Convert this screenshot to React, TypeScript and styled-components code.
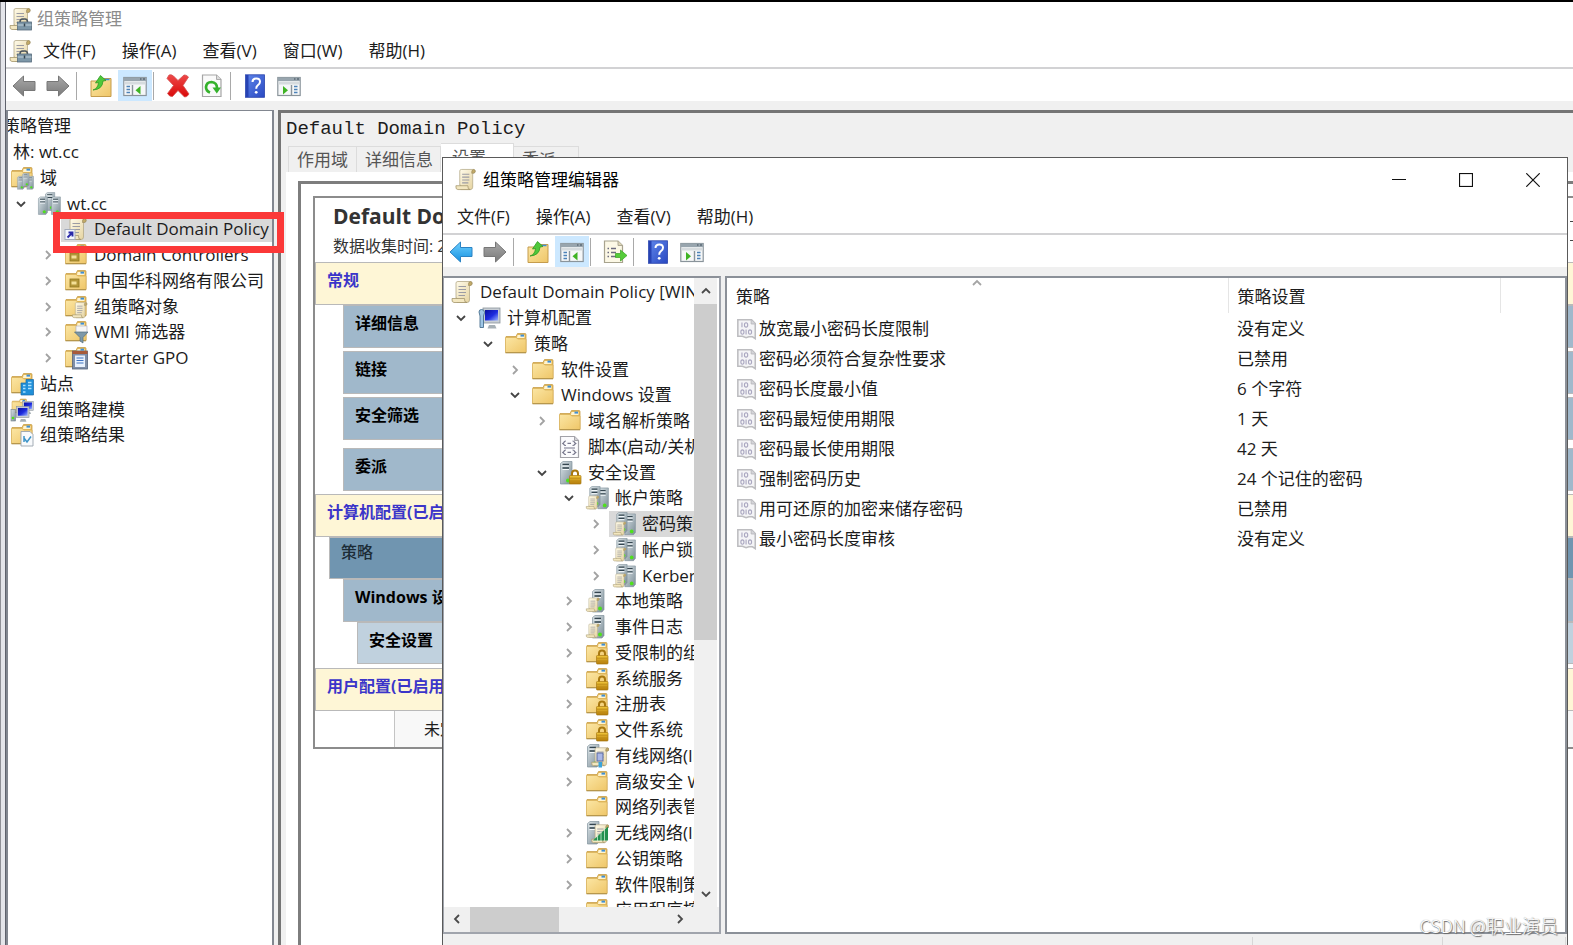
import React from "react";
import styled, { createGlobalStyle, css } from "styled-components";

const GlobalStyle = createGlobalStyle`
  *, *::before, *::after { box-sizing: border-box; }
  body {
    margin: 0;
    overflow: hidden;
    background: #fff;
    color: #1c1c1c;
    font-family: "Open Sans", "Noto Sans CJK SC", sans-serif;
    font-size: 17px;
    line-height: 24px;
  }
  button {
    border: 0;
    padding: 0;
    margin: 0;
    background: none;
    color: inherit;
    font: inherit;
    white-space: nowrap;
  }
  ul { list-style: none; margin: 0; padding: 0; }
  svg { display: block; flex: none; }
`;

/* ---------- icons ---------- */

const IconSvg = styled.svg<{ $size?: number }>`
  width: ${(p) => p.$size ?? 24}px;
  height: ${(p) => p.$size ?? 24}px;
`;

const DefsSvg = styled.svg`
  position: absolute;
  width: 0;
  height: 0;
`;

const SharedDefs = () => (
  <DefsSvg aria-hidden="true">
    <defs>
      <linearGradient id="gFolder" x1="0" y1="0" x2="1" y2="1">
        <stop offset="0" stopColor="#fbe6a4" />
        <stop offset="1" stopColor="#efc668" />
      </linearGradient>
      <linearGradient id="gPaper" x1="0" y1="0" x2="1" y2="1">
        <stop offset="0" stopColor="#fffbea" />
        <stop offset="1" stopColor="#e3d09a" />
      </linearGradient>
      <linearGradient id="gServer" x1="0" y1="0" x2="1" y2="1">
        <stop offset="0" stopColor="#dbe4e8" />
        <stop offset="1" stopColor="#7c8d97" />
      </linearGradient>
      <linearGradient id="gLock" x1="0" y1="0" x2="0" y2="1">
        <stop offset="0" stopColor="#f2c83c" />
        <stop offset="1" stopColor="#b37a08" />
      </linearGradient>
      <linearGradient id="gScreen" x1="0" y1="0" x2="1" y2="1">
        <stop offset="0" stopColor="#0b0f9c" />
        <stop offset="0.55" stopColor="#1d2ce0" />
        <stop offset="1" stopColor="#9bb4ff" />
      </linearGradient>
      <linearGradient id="gBlueArrow" x1="0" y1="0" x2="0" y2="1">
        <stop offset="0" stopColor="#6fd0ff" />
        <stop offset="1" stopColor="#1590e0" />
      </linearGradient>
      <linearGradient id="gGrayArrow" x1="0" y1="0" x2="0" y2="1">
        <stop offset="0" stopColor="#a9a9a9" />
        <stop offset="1" stopColor="#7a7a7a" />
      </linearGradient>
      <linearGradient id="gHelp" x1="0" y1="0" x2="1" y2="1">
        <stop offset="0" stopColor="#5f86ea" />
        <stop offset="1" stopColor="#2a49c2" />
      </linearGradient>
      <linearGradient id="gRed" x1="0" y1="0" x2="0" y2="1">
        <stop offset="0" stopColor="#ee4a4a" />
        <stop offset="1" stopColor="#d90808" />
      </linearGradient>
    </defs>
  </DefsSvg>
);

const Scroll = () => (
  <g strokeLinejoin="round">
    <path d="M6 3 Q6 1.5 8 1.5 H20.5 Q22.5 1.5 22 4 Q21.600 5.500 19.500 5.500 V20 Q19.500 22.500 17 22.500 H7 V18 H6 Z" fill="url(#gPaper)" stroke="#b5aa88" strokeWidth="0.8" />
    <path d="M18.500 5.500 Q18 1.800 20.500 1.600 Q22.800 2 22 4.500 Q21.500 5.700 18.500 5.500Z" fill="#c3ab68" stroke="#96855a" strokeWidth="0.6" />
    <path d="M2 18.500 H14.500 Q14 22.500 17 22.500 H4 Q1.500 22.500 2 18.500Z" fill="#f3e7c0" stroke="#a3956c" strokeWidth="0.8" />
    <path d="M8.500 6.500 H16 M8.500 9.500 H16 M8.500 12.500 H16 M8.500 15.500 H15" stroke="#9c9ca4" strokeWidth="1.1" fill="none" />
  </g>
);

const Folder = () => (
  <g>
    <path d="M2 4.500 H12 L13.500 1.500 H21 Q22 1.500 22 2.500 V20.500 H2 Z" fill="#e3b859" stroke="#c9a04a" strokeWidth="0.8" />
    <path d="M13.500 3 H20.500 V6 H13 Z" fill="#fff4cf" />
    <rect x="16.500" y="2.600" width="3.500" height="2" fill="#3f8fd6" />
    <path d="M1.500 5.500 H12 L14 7 H22 V20.500 H1.500 Z" fill="url(#gFolder)" stroke="#d9b25c" strokeWidth="0.8" />
    <path d="M1.500 20.800 H22" stroke="#a98b45" strokeWidth="1" />
  </g>
);

const Server = () => (
  <g>
    <path d="M2.500 2.500 L5 0.500 H14 V20.500 L12 23 H2.500 Z" fill="url(#gServer)" stroke="#81929c" strokeWidth="0.7" />
    <path d="M4.500 3.500 H11 M4.500 7 H11" stroke="#34454f" strokeWidth="1.400" />
    <path d="M4.500 5 H11 M4.500 8.500 H11" stroke="#f4f9fb" strokeWidth="1.100" />
    <circle cx="10" cy="19.500" r="2" fill="#4fe01d" />
  </g>
);

const Lock = () => (
  <g>
    <path d="M14 16 V12.500 Q14 9.500 17 9.500 Q20 9.500 20 12.500 V16" fill="none" stroke="#a8780f" strokeWidth="2" />
    <rect x="11.500" y="14.500" width="11.500" height="8.500" rx="0.800" fill="url(#gLock)" stroke="#a87812" strokeWidth="0.7" />
    <path d="M12 17.200 H22.500 M12 20 H22.500" stroke="#b98613" strokeWidth="0.8" />
  </g>
);

const Monitor = () => (
  <g>
    <path d="M12 19 H18 L19.500 22.500 H10.500Z" fill="#a7b0b6" />
    <rect x="6" y="2" width="17" height="15" fill="#c8ced4" stroke="#8b949b" strokeWidth="0.8" />
    <rect x="8" y="4" width="13" height="10.500" fill="url(#gScreen)" />
  </g>
);

type IconName =
  | "none" | "gpmc" | "scroll" | "scrollLink" | "folder" | "folderDomain" | "folderOu" | "folderScroll"
  | "folderFilter" | "folderDoc" | "folderSite" | "modeling" | "folderResult" | "domain" | "computer"
  | "script" | "serverLock" | "serversScroll" | "serverScroll" | "folderLock" | "wired" | "wireless" | "binary";

const glyphs: Record<IconName, React.ReactNode> = {
  none: null,
  gpmc: (
    <>
      <Scroll />
      <path d="M12 15 Q12 12 14.500 12 H17 Q19.500 12 19.500 15" fill="none" stroke="#4c555c" strokeWidth="1.600" />
      <rect x="9.500" y="15" width="14" height="8" fill="#7d97a8" stroke="#566a7a" strokeWidth="0.800" />
      <path d="M9.500 18 H23.500" stroke="#c3d2dc" strokeWidth="1" />
      <path d="M16.500 16.500 V19.500" stroke="#35444f" strokeWidth="1.500" />
    </>
  ),
  scroll: <Scroll />,
  scrollLink: (
    <>
      <Scroll />
      <rect x="1" y="12.500" width="10" height="10" fill="#f4f7fc" stroke="#a3abbb" strokeWidth="1" />
      <path d="M3.500 20.500 L7.500 16.500 M4.500 15.500 H8.500 V19.500" stroke="#2b2aa8" strokeWidth="1.900" fill="none" />
    </>
  ),
  folder: <Folder />,
  folderDomain: (
    <>
      <Folder />
      <g transform="translate(6 10) scale(0.58)"><Server /></g>
      <g transform="translate(15.500 10) scale(0.58)"><Server /></g>
      <g transform="translate(11 7) scale(0.58)"><Server /></g>
    </>
  ),
  folderOu: (
    <>
      <Folder />
      <rect x="6" y="10" width="9" height="8" fill="#b39638" stroke="#927821" strokeWidth="0.800" />
      <rect x="7.500" y="12.500" width="5" height="3" fill="#f3df96" />
    </>
  ),
  folderScroll: (
    <>
      <Folder />
      <g transform="translate(7 6.500) scale(0.72)"><Scroll /></g>
    </>
  ),
  folderFilter: (
    <>
      <Folder />
      <rect x="12" y="6" width="11" height="7" fill="#f6f6f6" stroke="#aab" strokeWidth="0.600" />
      <path d="M10.500 12 H24 L19 17.500 V23 L16 21 V17.500 Z" fill="#7d98a8" stroke="#546f80" strokeWidth="0.700" />
    </>
  ),
  folderDoc: (
    <>
      <Folder />
      <rect x="8.500" y="5" width="15" height="18" fill="#7f8fa8" stroke="#55647c" strokeWidth="0.800" />
      <path d="M8.500 5 H23.500 V8 H8.500Z" fill="#a85b3a" />
      <rect x="11" y="9.500" width="10" height="11.500" fill="#e9f2fd" />
      <path d="M12.500 12 H19.500 M12.500 14.500 H19.500 M12.500 17 H19.500" stroke="#3e74c4" strokeWidth="1.200" />
    </>
  ),
  folderSite: (
    <>
      <Folder />
      <path d="M11 11 H16 V7.500 H23.500 V23 H11 Z" fill="#1f8fd8" stroke="#1767a8" strokeWidth="0.700" />
      <path d="M13 13.500 H15.500 M13 16.500 H15.500 M18 10.500 H21.500 M18 13.500 H21.500 M18 16.500 H21.500 M13 20 H15.500" stroke="#a9e0ff" strokeWidth="1.600" />
    </>
  ),
  modeling: (
    <>
      <g transform="translate(1 0) scale(0.70)"><Folder /></g>
      <g transform="translate(9 2) scale(0.62)"><Monitor /></g>
      <g transform="translate(2 7) scale(0.74)"><Monitor /></g>
      <rect x="1" y="11.500" width="4.500" height="11.500" fill="url(#gServer)" stroke="#728089" strokeWidth="0.600" />
      <circle cx="3" cy="20" r="1.300" fill="#4fe01d" />
    </>
  ),
  folderResult: (
    <>
      <Folder />
      <path d="M11 8.500 H20 L23 11.500 V23 H11 Z" fill="#f8fafc" stroke="#9aa4ae" strokeWidth="0.900" />
      <path d="M14 15 L17 19 L21 13.500 M14 13 V19" stroke="#3d94c8" strokeWidth="1.500" fill="none" />
    </>
  ),
  domain: (
    <>
      <g transform="translate(6.500 0) scale(0.80)"><Server /></g>
      <g transform="translate(-0.500 4.500) scale(0.78)"><Server /></g>
      <g transform="translate(12.500 4.500) scale(0.78)"><Server /></g>
    </>
  ),
  computer: (
    <>
      <Monitor />
      <path d="M2 6 Q2 3.500 4.500 3.500 Q7.500 3.500 7.500 6.500 L6.500 10 V21.500 H3 V10 Z" fill="#9fc6e6" stroke="#49718e" strokeWidth="0.900" />
    </>
  ),
  script: (
    <>
      <path d="M2.500 1.500 H16.500 L20.500 5.500 V22.500 H2.500 Z" fill="#fbfbfd" stroke="#a2a2a8" strokeWidth="1.200" />
      <path d="M16.500 1.500 V5.500 H20.500" fill="#d0d0d6" stroke="#a2a2a8" strokeWidth="1" />
      <path d="M8 6 Q6 6 6 7.500 L4.800 8.500 L6 9.500 Q6 10.500 8 10.500 M14.500 6 Q16.500 6 16.500 7.500 L17.800 8.500 L16.500 9.500 Q16.500 10.500 14.500 10.500 M9.500 8.300 H13 M6 13 H17 M8 15 Q6 15 6 16.500 L4.800 17.500 L6 18.500 Q6 19.500 8 19.500 M14.500 15 Q16.500 15 16.500 16.500 L17.800 17.500 L16.500 18.500 Q16.500 19.500 14.500 19.500 M9.500 17.400 H13" fill="none" stroke="#77778c" strokeWidth="1.200" />
    </>
  ),
  serverLock: (<><Server /><Lock /></>),
  serversScroll: (
    <>
      <g transform="translate(10.500 1.500) scale(0.920)"><Server /></g>
      <g transform="translate(2.500 0) scale(0.900)"><Server /></g>
      <g transform="translate(0 9) scale(0.620)"><Scroll /></g>
    </>
  ),
  serverScroll: (
    <>
      <g transform="translate(5 0)"><Server /></g>
      <g transform="translate(0 8) scale(0.640)"><Scroll /></g>
    </>
  ),
  folderLock: (<><Folder /><Lock /></>),
  wired: (
    <>
      <Server />
      <g transform="translate(5 2.500) scale(0.850)"><Scroll /></g>
      <rect x="12" y="9" width="6" height="8" fill="#aab7e6" stroke="#5a6aa0" strokeWidth="1" />
      <rect x="13.500" y="18" width="3.500" height="5.500" fill="#3ba4da" />
    </>
  ),
  wireless: (
    <>
      <Server />
      <g transform="translate(5 2.500) scale(0.850)"><Scroll /></g>
      <path d="M8 19.500 L23 5.500 V19.500 Z" fill="#23904f" />
      <path d="M12.500 13 V20 M16 10 V20 M19.500 7 V20" stroke="#c9ecd4" strokeWidth="0.800" />
    </>
  ),
  binary: (
    <>
      <path d="M2 2 H17 L21 6 V22.500 L18 20.500 H14 L11 21.500 L7 20 H2 Z" fill="#f4f4f6" stroke="#bdbdc0" strokeWidth="1.700" />
      <path d="M16.500 2 V6.500 H21" fill="#d6d6da" stroke="#b8b8bc" strokeWidth="1" />
      <path d="M6.500 5 V10 M11 12.500 V18" fill="none" stroke="#aaa7c0" strokeWidth="1.200" />
      <ellipse cx="11" cy="7.500" rx="1.800" ry="2.400" fill="none" stroke="#aaa7c0" strokeWidth="1.200" />
      <ellipse cx="7" cy="15.300" rx="1.700" ry="2.400" fill="none" stroke="#aaa7c0" strokeWidth="1.200" />
      <ellipse cx="15.300" cy="15.300" rx="1.700" ry="2.400" fill="none" stroke="#aaa7c0" strokeWidth="1.200" />
    </>
  ),
};

const Icon = ({ name, size }: { name: IconName; size?: number }) => (
  <IconSvg viewBox="0 0 24 24" $size={size} aria-hidden="true">{glyphs[name]}</IconSvg>
);

type ToolName = "back" | "backBlue" | "forward" | "up" | "tree" | "delete" | "refresh" | "export" | "help" | "action";

const PaneFrame = () => (
  <>
    <rect x="0.800" y="3.500" width="22.400" height="18" fill="#f5f7f8" stroke="#8a949b" strokeWidth="1.200" />
    <rect x="1" y="3.500" width="22" height="3.500" fill="#98a5ae" />
    <path d="M17 5 H18.500 M20 5 H22" stroke="#3c4c58" strokeWidth="1.200" />
    <rect x="1.400" y="7.500" width="21.200" height="3" fill="#d6dbde" />
  </>
);

const tools: Record<ToolName, React.ReactNode> = {
  back: <path d="M1 12 L11.500 2 V7.500 H23 V16.500 H11.500 V22 Z" fill="url(#gGrayArrow)" stroke="#777" strokeWidth="1" strokeLinejoin="round" />,
  backBlue: <path d="M1 12 L11.500 2 V7.500 H23 V16.500 H11.500 V22 Z" fill="url(#gBlueArrow)" stroke="#2a83c4" strokeWidth="1" strokeLinejoin="round" />,
  forward: <path d="M23 12 L12.500 2 V7.500 H1 V16.500 H12.500 V22 Z" fill="url(#gGrayArrow)" stroke="#777" strokeWidth="1" strokeLinejoin="round" />,
  up: (
    <>
      <path d="M2 7 H12 L14 4.500 H22 V22.500 H2 Z" fill="url(#gFolder)" stroke="#c59c4c" strokeWidth="1" />
      <path d="M15.500 5.500 H20.500" stroke="#3f8fd6" strokeWidth="1.500" />
      <path d="M4 16 Q9 14.500 9.500 8.500 L6.500 9 L11.500 1.500 L17 6.500 L14 7 Q13.500 15.500 4 16 Z" fill="#4fc83a" stroke="#2f9b22" strokeWidth="0.800" />
    </>
  ),
  tree: (
    <>
      <PaneFrame />
      <path d="M3.500 12.500 H7 M3.500 15.500 H7 M3.500 18.500 H7" stroke="#4d82b8" strokeWidth="1.500" />
      <path d="M9.500 11 V21.500" stroke="#8a949b" strokeWidth="1.400" />
      <path d="M17.500 12 V20.500 L12.500 16.200 Z" fill="#3fb324" />
    </>
  ),
  action: (
    <>
      <PaneFrame />
      <path d="M17 12.500 H20.500 M17 15.500 H20.500 M17 18.500 H20.500" stroke="#4d82b8" strokeWidth="1.500" />
      <path d="M14.500 11 V21.500" stroke="#8a949b" strokeWidth="1.400" />
      <path d="M6 12 V20.500 L11 16.200 Z" fill="#3fb324" />
    </>
  ),
  delete: <path d="M3 1 Q5 0 7.500 2 L12 6.500 L18 1 Q20 0.500 22.500 3 L17 11.500 L23 20 Q21 23.500 18.500 23 L12 16.500 L6.500 22.500 Q3.500 23 1.500 19.500 L7.500 11.500 L1 4.500 Z" fill="url(#gRed)" stroke="#d45050" strokeWidth="0.800" strokeLinejoin="round" />,
  refresh: (
    <>
      <path d="M2.500 1 H16.500 L21 5.500 V22.500 H2.500 Z" fill="#fafafa" stroke="#a5a5a5" strokeWidth="1.200" />
      <path d="M16.500 1 V5.500 H21" fill="#dcdcdc" stroke="#a5a5a5" strokeWidth="0.900" />
      <path d="M10 18.500 Q6 17 6 13 Q6.500 8 11.500 8 Q17 8.500 17 14" fill="none" stroke="#35b22c" strokeWidth="2.700" />
      <path d="M12.500 13.500 H21 L16.800 19.500 Z" fill="#35b22c" />
    </>
  ),
  export: (
    <>
      <path d="M1.500 1 H15 L19.500 5.500 V22.500 H1.500 Z" fill="#fcf8e6" stroke="#a8a38e" strokeWidth="1.200" />
      <path d="M15 1 V5.500 H19.500" fill="#ddd6b8" stroke="#a8a38e" strokeWidth="0.900" />
      <path d="M4.500 8.500 H6 M8 8.500 H13 M4.500 12.500 H6 M8 12.500 H13 M4.500 16.500 H6 M8 16.500 H13" stroke="#6d6b80" strokeWidth="1.500" />
      <path d="M12.500 13.500 H17.500 V10 L24 15.500 L17.500 21 V17.500 H12.500 Z" fill="#55cc3a" stroke="#36a022" strokeWidth="0.700" />
    </>
  ),
  help: (
    <>
      <rect x="2.500" y="0.800" width="19" height="22.500" fill="url(#gHelp)" stroke="#2a44ac" strokeWidth="0.800" />
      <path d="M3 1 H5.500 V23 H3 Z" fill="#2743b4" />
      <path d="M9.500 8 Q9.500 4.500 13.300 4.500 Q17 4.500 17 7.800 Q17 10 14.700 11.300 Q13.200 12.200 13.200 14.800" fill="none" stroke="#fff" strokeWidth="2" />
      <circle cx="13.200" cy="18.300" r="1.400" fill="#fff" />
    </>
  ),
};

/* ---------- shared window parts ---------- */

const MenuBar = styled.nav<{ $pad: number }>`
  display: flex;
  align-items: center;
  height: 32px;
  padding-left: ${(p) => p.$pad}px;
`;

const MenuItem = styled.button`
  padding: 0 13px;
  height: 28px;
`;

const MenuIcon = styled.span`
  width: 22px;
`;

const ToolBar = styled.div`
  display: flex;
  align-items: stretch;
  height: 34px;
  padding: 1px 0 0 1px;
  background: #fff;
  border-top: 2px solid #d2d2d4;
`;

const ToolButton = styled.button<{ $active?: boolean }>`
  display: flex;
  align-items: center;
  justify-content: center;
  width: 34px;
  background: ${(p) => (p.$active ? "#cce8ff" : "none")};
`;

const ToolDivider = styled.span`
  width: 1px;
  margin: 2px 7px 1px 1px;
  background: #a9a9a9;
`;

const toolLabels: Record<ToolName, string> = {
  back: "后退", backBlue: "后退", forward: "前进", up: "上移一级", tree: "显示/隐藏控制台树",
  delete: "删除", refresh: "刷新", export: "导出列表", help: "帮助", action: "显示/隐藏操作窗格",
};

const Tools = ({ items }: { items: (ToolName | "|")[] }) => (
  <ToolBar role="toolbar">
    {items.map((t, i) =>
      t === "|" ? (
        <ToolDivider key={i} />
      ) : (
        <ToolButton key={i} $active={t === "tree"} aria-label={toolLabels[t]}>
          <IconSvg viewBox="0 0 24 24" aria-hidden="true">{tools[t]}</IconSvg>
        </ToolButton>
      )
    )}
  </ToolBar>
);

/* ---------- tree ---------- */

interface Node {
  label: string;
  level: number;
  icon: IconName;
  state?: "open" | "closed";
  selected?: boolean;
}

const TreeList = styled.ul<{ $scrolled?: boolean }>`
  flex: 1;
  min-width: 0;
  overflow: hidden;
  padding-top: 1px;
  margin-left: ${(p) => (p.$scrolled ? -57 : 1)}px;
`;

const TreeRow = styled.li<{ $level: number }>`
  display: flex;
  height: 26px;
  padding-left: ${(p) => (p.$level === 0 ? 2 : 27 * (p.$level - 1))}px;
  white-space: nowrap;

  &:nth-child(4n) {
    height: 25px;
  }
`;

const Twisty = styled.button`
  display: flex;
  flex: none;
  align-items: center;
  justify-content: center;
  width: 29px;
  padding-left: 3px;
`;

const TwistyGap = styled.span`
  flex: none;
  width: 29px;
`;

const NodeBody = styled.span<{ $selected?: boolean }>`
  display: flex;
  align-items: center;
  gap: 6px;
  padding: 0 3px;
  background: ${(p) => (p.$selected ? "#d9d9d9" : "none")};
`;

const Chevron = ({ dir, color = "#4a4a4a", size = 10 }: { dir: "up" | "down" | "left" | "right"; color?: string; size?: number }) => {
  const d = {
    up: "M1 7 L5 3 L9 7",
    down: "M1 3 L5 7 L9 3",
    left: "M7 1 L3 5 L7 9",
    right: "M3 1 L7 5 L3 9",
  }[dir];
  return (
    <IconSvg viewBox="0 0 10 10" $size={size} aria-hidden="true">
      <path d={d} fill="none" stroke={color} strokeWidth="1.800" />
    </IconSvg>
  );
};

const Tree = ({ nodes, scrolled }: { nodes: Node[]; scrolled?: boolean }) => (
  <TreeList role="tree" $scrolled={scrolled}>
    {nodes.map((n) => (
      <TreeRow key={n.label} role="treeitem" aria-selected={!!n.selected} $level={n.level}>
        {n.level > 0 &&
          (n.state ? (
            <Twisty aria-label={n.state === "open" ? "折叠" : "展开"}>
              <Chevron dir={n.state === "open" ? "down" : "right"} color={n.state === "open" ? "#444" : "#a2a2a2"} />
            </Twisty>
          ) : (
            <TwistyGap />
          ))}
        <NodeBody $selected={n.selected}>
          <Icon name={n.icon} />
          {n.label}
        </NodeBody>
      </TreeRow>
    ))}
  </TreeList>
);

/* ---------- console window ---------- */

const Desktop = styled.div`
  position: relative;
  display: flex;
  height: 100vh;
  overflow: hidden;
  border-top: 2px solid #000;
`;

const DesktopEdge = styled.div`
  flex: none;
  width: 6px;
  background: #e4e5ea;
  border-left: 1px solid #8f9096;
  border-right: 1px solid #5f626c;
`;

const Console = styled.main`
  display: flex;
  flex: 1;
  flex-direction: column;
  min-width: 0;
  background: #fff;
`;

const ConsoleTitle = styled.header`
  display: flex;
  align-items: center;
  gap: 5px;
  height: 33px;
  padding-left: 2px;
  color: #8c8c8c;
`;

const ConsoleBody = styled.div`
  display: flex;
  flex: 1;
  gap: 4px;
  min-height: 0;
  padding-top: 9px;
  background: #f0f0f0;
`;

const ConsoleTree = styled.aside`
  display: flex;
  flex: none;
  width: 268px;
  padding-top: 1px;
  overflow: hidden;
  background: #fff;
  border: solid #828790;
  border-width: 1px 2px 0;
`;

const Detail = styled.section`
  display: flex;
  flex: 1;
  flex-direction: column;
  min-width: 0;
  padding-left: 5px;
  border: solid #757575;
  border-width: 3px 0 0 3px;
`;

const DetailTitle = styled.h1`
  margin: 0;
  height: 29px;
  font: 400 19px/32px "Liberation Mono", monospace;
`;

const TabStrip = styled.div`
  display: flex;
  align-items: flex-end;
  height: 30px;
  padding-left: 2px;
`;

const Tab = styled.button<{ $active?: boolean; $width: number }>`
  width: ${(p) => p.$width}px;
  height: 26px;
  padding: 0 8px;
  text-align: left;
  color: #555;
  background: #f0f0f0;
  border: 1px solid #dcdcdc;
  border-width: 1px 1px 0 0;

  &:first-child { border-left-width: 1px; }

  ${(p) => p.$active && css`
    height: 29px;
    padding: 0 11px;
    background: #fff;
  `}
`;

const TabPage = styled.div`
  display: flex;
  flex: 1;
  min-height: 0;
  padding: 9px 0 0 12px;
  background: #fff;
`;

const ReportFrame = styled.div`
  flex: 1;
  padding: 12px 0 0 12px;
  border: solid #7d7d7d;
  border-width: 3px 0 0 3px;
`;

const Report = styled.article`
  border: solid #8c8c8c;
  border-width: 2px 0 0 2px;
  font-size: 16px;
`;

const ReportHead = styled.header`
  display: flex;
  justify-content: space-between;
  height: 64px;
  padding: 4px 0 0 18px;
  color: #333;
`;

const ReportName = styled.h2`
  margin: 0;
  font-size: 21px;
  line-height: 28px;
`;

const ReportTime = styled.p`
  margin: 0;
  line-height: 32px;
`;

/* dotted focus box of the report's expand-all link */
const ReportToggle = styled.button`
  width: 64px;
  height: 20px;
  margin-top: 19px;
  border: 1px dashed #444;
  border-right: 0;
`;

const tones = {
  section: { bg: "#fef6d6", fg: "#3b35c9" },
  deep: { bg: "#7095b0", fg: "#1c2c36" },
  mid: { bg: "#a0b8cb", fg: "#000" },
  pale: { bg: "#c0d1de", fg: "#000" },
};

const Band = styled.h3<{ $tone: keyof typeof tones; $level: number; $gap?: number }>`
  height: ${(p) => (p.$tone === "section" || p.$tone === "mid" ? 43 : 42)}px;
  margin: ${(p) => p.$gap ?? 0}px 0 0 ${(p) => p.$level * 14}px;
  padding: ${(p) => (p.$tone === "deep" ? 2 : 5)}px 11px;
  font-size: 16px;
  font-weight: ${(p) => (p.$tone === "deep" ? 500 : 700)};
  line-height: 24px;
  color: ${(p) => tones[p.$tone].fg};
  background: ${(p) => tones[p.$tone].bg};
  border: 1px solid #b9b9b9;
  border-right: 0;
`;

const Undefined = styled.div`
  display: flex;
  height: 38px;
  border-bottom: 2px solid #8c8c8c;
`;

const UndefinedText = styled.p`
  flex: 1;
  margin: 0 0 0 79px;
  padding: 6px 0 0 29px;
  background: #f8f8f8;
  border-left: 1px solid #c4c4c4;
`;

const Highlight = styled.div`
  position: absolute;
  left: 53px;
  top: 210px;
  width: 231px;
  height: 41px;
  border: 7px solid #fb3838;
`;

/* ---------- editor window ---------- */

const Editor = styled.section`
  position: absolute;
  top: 155px;
  right: 5px;
  bottom: 0;
  left: 442px;
  display: flex;
  flex-direction: column;
  background: #fff;
  border: 1px solid #5a5a5a;
  border-bottom: 0;
`;

const EditorTitle = styled.header`
  display: flex;
  align-items: center;
  gap: 6px;
  height: 43px;
  padding-left: 11px;
  color: #000;
`;

const EditorName = styled.h2`
  flex: 1;
  margin: 0;
  font-size: 17px;
  font-weight: 400;
`;

const CaptionGroup = styled.div`
  display: flex;
  padding-right: 1px;
`;

const CaptionButton = styled.button`
  display: flex;
  align-items: center;
  justify-content: center;
  width: 67px;
  height: 43px;
`;

const EditorBody = styled.div`
  display: flex;
  flex: 1;
  gap: 4px;
  min-height: 0;
  padding-top: 9px;
  background: #f0f0f0;
`;

const EditorTree = styled.aside`
  display: flex;
  flex: none;
  flex-direction: column;
  width: 278px;
  background: #fff;
  border: 2px solid #a0a4ac;
  border-top: 2px solid #8b9098;
  border-left-width: 1px;
`;

const TreeViewport = styled.div`
  display: flex;
  flex: 1;
  min-height: 0;
  padding-right: 2px;
`;

const ScrollBar = styled.div<{ $vertical?: boolean }>`
  display: flex;
  flex: none;
  flex-direction: ${(p) => (p.$vertical ? "column" : "row")};
  ${(p) => (p.$vertical ? "width: 23px;" : "height: 25px;")}
  background: #f0f0f0;
`;

const ScrollArrow = styled.button`
  display: flex;
  flex: none;
  align-items: center;
  justify-content: center;
  width: 26px;
  height: 24px;
`;

const VerticalArrow = styled(ScrollArrow)`
  width: 23px;
  height: 26px;
`;

const Thumb = styled.div<{ $vertical?: boolean }>`
  ${(p) => (p.$vertical ? "flex: 338 0 0;" : "flex: 89 0 0;")}
  background: #cdcdcd;
`;

const Track = styled.div<{ $vertical?: boolean }>`
  ${(p) => (p.$vertical ? "flex: 242 0 0;" : "flex: 108 0 0;")}
`;

const Corner = styled.div`
  width: 26px;
`;

const PolicyPane = styled.div`
  flex: 1;
  min-width: 0;
  overflow: hidden;
  background: #fff;
  border: 2px solid #8b9098;
`;

const PolicyTable = styled.table`
  width: 100%;
  table-layout: fixed;
  border-collapse: collapse;
  white-space: nowrap;
`;

const NameCol = styled.col` width: 501px; `;
const ValueCol = styled.col` width: 272px; `;

const HeadCell = styled.th`
  position: relative;
  height: 35px;
  padding: 2px 9px 0;
  font-weight: 400;
  text-align: left;
  border-right: 1px solid #e5e5e5;
  &:last-child { border-right: 0; }
`;

const SortMark = styled.span`
  position: absolute;
  top: 0;
  right: 0;
  left: 0;
  display: flex;
  justify-content: center;
`;

const Cell = styled.td`
  height: 30px;
  padding: 1px 9px 0;
`;

const PolicyName = styled.span`
  display: flex;
  align-items: center;
  gap: 1px;
`;

const StatusBar = styled.footer`
  display: flex;
  justify-content: flex-end;
  height: 11px;
  padding-top: 3px;
  background: #f0f0f0;
`;

const StatusCell = styled.span<{ $width: number }>`
  width: ${(p) => p.$width}px;
  border-left: 1px solid #d7d7d7;
`;

const Watermark = styled.span`
  position: absolute;
  right: 15px;
  bottom: 7px;
  font: 300 18px/26px "Noto Sans CJK SC", sans-serif;
  color: #fff;
  text-shadow: 1px 1px 1px #666, 0 0 1px #888;
`;

/* ---------- data ---------- */

const consoleNodes: Node[] = [
  { label: "组策略管理", level: 0, icon: "gpmc" },
  { label: "林: wt.cc", level: 1, icon: "none" },
  { label: "域", level: 2, icon: "folderDomain" },
  { label: "wt.cc", level: 3, icon: "domain", state: "open" },
  { label: "Default Domain Policy", level: 4, icon: "scrollLink", selected: true },
  { label: "Domain Controllers", level: 4, icon: "folderOu", state: "closed" },
  { label: "中国华科网络有限公司", level: 4, icon: "folderOu", state: "closed" },
  { label: "组策略对象", level: 4, icon: "folderScroll", state: "closed" },
  { label: "WMI 筛选器", level: 4, icon: "folderFilter", state: "closed" },
  { label: "Starter GPO", level: 4, icon: "folderDoc", state: "closed" },
  { label: "站点", level: 2, icon: "folderSite" },
  { label: "组策略建模", level: 2, icon: "modeling" },
  { label: "组策略结果", level: 2, icon: "folderResult" },
];

const editorNodes: Node[] = [
  { label: "Default Domain Policy [WIN", level: 0, icon: "scroll" },
  { label: "计算机配置", level: 1, icon: "computer", state: "open" },
  { label: "策略", level: 2, icon: "folder", state: "open" },
  { label: "软件设置", level: 3, icon: "folder", state: "closed" },
  { label: "Windows 设置", level: 3, icon: "folder", state: "open" },
  { label: "域名解析策略", level: 4, icon: "folder", state: "closed" },
  { label: "脚本(启动/关机)", level: 4, icon: "script" },
  { label: "安全设置", level: 4, icon: "serverLock", state: "open" },
  { label: "帐户策略", level: 5, icon: "serversScroll", state: "open" },
  { label: "密码策略", level: 6, icon: "serversScroll", state: "closed", selected: true },
  { label: "帐户锁定策略", level: 6, icon: "serversScroll", state: "closed" },
  { label: "Kerberos 策略", level: 6, icon: "serversScroll", state: "closed" },
  { label: "本地策略", level: 5, icon: "serverScroll", state: "closed" },
  { label: "事件日志", level: 5, icon: "serverScroll", state: "closed" },
  { label: "受限制的组", level: 5, icon: "folderLock", state: "closed" },
  { label: "系统服务", level: 5, icon: "folderLock", state: "closed" },
  { label: "注册表", level: 5, icon: "folderLock", state: "closed" },
  { label: "文件系统", level: 5, icon: "folderLock", state: "closed" },
  { label: "有线网络(IEEE 802.3)策略", level: 5, icon: "wired", state: "closed" },
  { label: "高级安全 Windows", level: 5, icon: "folder", state: "closed" },
  { label: "网络列表管理器策略", level: 5, icon: "folder" },
  { label: "无线网络(IEEE 802.11)策略", level: 5, icon: "wireless", state: "closed" },
  { label: "公钥策略", level: 5, icon: "folder", state: "closed" },
  { label: "软件限制策略", level: 5, icon: "folder", state: "closed" },
  { label: "应用程序控制策略", level: 5, icon: "folder" },
];

const policies = [
  ["放宽最小密码长度限制", "没有定义"],
  ["密码必须符合复杂性要求", "已禁用"],
  ["密码长度最小值", "6 个字符"],
  ["密码最短使用期限", "1 天"],
  ["密码最长使用期限", "42 天"],
  ["强制密码历史", "24 个记住的密码"],
  ["用可还原的加密来储存密码", "已禁用"],
  ["最小密码长度审核", "没有定义"],
];

const EditorWindow = () => (
  <Editor aria-label="组策略管理编辑器">
    <EditorTitle>
      <Icon name="scroll" size={23} />
      <EditorName>组策略管理编辑器</EditorName>
      <CaptionGroup>
        <CaptionButton aria-label="最小化">
          <svg width="14" height="14" viewBox="0 0 14 14"><path d="M0 6.500 H14" stroke="#111" strokeWidth="1" /></svg>
        </CaptionButton>
        <CaptionButton aria-label="最大化">
          <svg width="14" height="14" viewBox="0 0 14 14"><rect x="0.500" y="0.500" width="13" height="13" fill="none" stroke="#111" strokeWidth="1.200" /></svg>
        </CaptionButton>
        <CaptionButton aria-label="关闭">
          <svg width="14" height="14" viewBox="0 0 14 14"><path d="M0.300 0.300 L13.700 13.700 M13.700 0.300 L0.300 13.700" stroke="#111" strokeWidth="1.200" /></svg>
        </CaptionButton>
      </CaptionGroup>
    </EditorTitle>
    <MenuBar $pad={1}>
      {["文件(F)", "操作(A)", "查看(V)", "帮助(H)"].map((m) => <MenuItem key={m}>{m}</MenuItem>)}
    </MenuBar>
    <Tools items={["backBlue", "forward", "|", "up", "tree", "|", "export", "|", "help", "action"]} />
    <EditorBody>
      <EditorTree>
        <TreeViewport>
          <Tree nodes={editorNodes} />
          <ScrollBar $vertical>
            <VerticalArrow aria-label="向上滚动"><Chevron dir="up" /></VerticalArrow>
            <Thumb $vertical />
            <Track $vertical />
            <VerticalArrow aria-label="向下滚动"><Chevron dir="down" /></VerticalArrow>
          </ScrollBar>
        </TreeViewport>
        <ScrollBar>
          <ScrollArrow aria-label="向左滚动"><Chevron dir="left" /></ScrollArrow>
          <Thumb />
          <Track />
          <ScrollArrow aria-label="向右滚动"><Chevron dir="right" /></ScrollArrow>
          <Corner />
        </ScrollBar>
      </EditorTree>
      <PolicyPane>
        <PolicyTable>
          <colgroup><NameCol /><ValueCol /><col /></colgroup>
          <thead>
            <tr>
              <HeadCell>策略<SortMark><Chevron dir="up" color="#a5a5a5" /></SortMark></HeadCell>
              <HeadCell>策略设置</HeadCell>
              <HeadCell />
            </tr>
          </thead>
          <tbody>
            {policies.map(([name, value]) => (
              <tr key={name}>
                <Cell><PolicyName><Icon name="binary" size={22} />{name}</PolicyName></Cell>
                <Cell>{value}</Cell>
                <Cell />
              </tr>
            ))}
          </tbody>
        </PolicyTable>
      </PolicyPane>
    </EditorBody>
    <StatusBar>
      <StatusCell $width={190} />
      <StatusCell $width={123} />
      <StatusCell $width={2} />
    </StatusBar>
  </Editor>
);

export default function App() {
  return (
    <>
      <GlobalStyle />
      <SharedDefs />
      <Desktop>
        <DesktopEdge />
        <Console>
          <ConsoleTitle><Icon name="gpmc" />组策略管理</ConsoleTitle>
          <MenuBar $pad={2}>
            <MenuIcon><Icon name="gpmc" /></MenuIcon>
            {["文件(F)", "操作(A)", "查看(V)", "窗口(W)", "帮助(H)"].map((m) => <MenuItem key={m}>{m}</MenuItem>)}
          </MenuBar>
          <Tools items={["back", "forward", "|", "up", "tree", "|", "delete", "refresh", "|", "help", "action"]} />
          <ConsoleBody>
            <ConsoleTree><Tree nodes={consoleNodes} scrolled /></ConsoleTree>
            <Detail>
              <DetailTitle>Default Domain Policy</DetailTitle>
              <TabStrip role="tablist">
                <Tab role="tab" $width={69}>作用域</Tab>
                <Tab role="tab" $width={84}>详细信息</Tab>
                <Tab role="tab" $width={73} $active>设置</Tab>
                <Tab role="tab" $width={65}>委派</Tab>
              </TabStrip>
              <TabPage>
                <ReportFrame>
                  <Report>
                    <ReportHead>
                      <div>
                        <ReportName>Default Domain Policy</ReportName>
                        <ReportTime>数据收集时间: 2</ReportTime>
                      </div>
                      <ReportToggle aria-label="全部展开" />
                    </ReportHead>
                    <Band $tone="section" $level={0}>常规</Band>
                    <Band $tone="mid" $level={2}>详细信息</Band>
                    <Band $tone="mid" $level={2} $gap={3}>链接</Band>
                    <Band $tone="mid" $level={2} $gap={3}>安全筛选</Band>
                    <Band $tone="mid" $level={2} $gap={8}>委派</Band>
                    <Band $tone="section" $level={0} $gap={3}>计算机配置(已启用)</Band>
                    <Band $tone="deep" $level={1}>策略</Band>
                    <Band $tone="mid" $level={2}>Windows 设置</Band>
                    <Band $tone="pale" $level={3}>安全设置</Band>
                    <Band $tone="section" $level={0} $gap={4}>用户配置(已启用)</Band>
                    <Undefined><UndefinedText>未定义任何设置。</UndefinedText></Undefined>
                  </Report>
                </ReportFrame>
              </TabPage>
            </Detail>
          </ConsoleBody>
        </Console>
        <Highlight />
        <EditorWindow />
        <Watermark>CSDN @职业演员</Watermark>
      </Desktop>
    </>
  );
}
